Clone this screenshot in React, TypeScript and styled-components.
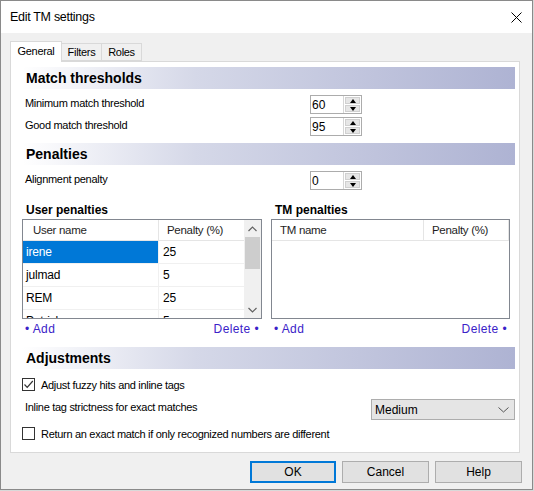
import React from 'react';
import styled, { createGlobalStyle } from 'styled-components';

const GlobalStyle = createGlobalStyle`
	html, body {
		margin: 0;
		padding: 0;
		background: #d9d9d9;
	}
	body {
		font-family: 'Liberation Sans', Arial, sans-serif;
		font-size: 11px;
		color: #000000;
	}
`;

const users = [
	{ name: 'irene', penalty: '25' },
	{ name: 'julmad', penalty: '5' },
	{ name: 'REM', penalty: '25' },
	{ name: 'Patrick', penalty: '5' },
];

const CloseIcon = () => (
	<svg width='11' height='11' viewBox='0 0 11 11'>
		<path d='M0.5 0.5 L10.5 10.5 M10.5 0.5 L0.5 10.5' stroke='#000' strokeWidth='1' fill='none' />
	</svg>
);

const Chevron = ({ up }: { up?: boolean }) => (
	<svg width='9' height='6' viewBox='0 0 9 6'>
		<path
			d={up ? 'M0.5 5 L4.5 1 L8.5 5' : 'M0.5 1 L4.5 5 L8.5 1'}
			stroke='#606060'
			strokeWidth='1.2'
			fill='none'
		/>
	</svg>
);

const CheckMark = () => (
	<svg width='11' height='11' viewBox='0 0 11 11'>
		<path d='M1.5 5.5 L4.2 8.3 L9.8 2' stroke='#333' strokeWidth='1.2' fill='none' />
	</svg>
);

const Spinner = ({ value }: { value: string }) => (
	<SpinBox>
		<SpinValue>{value}</SpinValue>
		<SpinButtons>
			<SpinBtn>
				<Arrow $up />
			</SpinBtn>
			<SpinBtn>
				<Arrow />
			</SpinBtn>
		</SpinButtons>
	</SpinBox>
);

export const App = () => (
	<>
		<GlobalStyle />
		<Window>
			<TitleBar>
				<Title>Edit TM settings</Title>
				<CloseButton>
					<CloseIcon />
				</CloseButton>
			</TitleBar>
			<Body>
				<TabStrip>
					<Tab $active>General</Tab>
					<Tab>Filters</Tab>
					<Tab>Roles</Tab>
				</TabStrip>
				<Panel>
					<Band>Match thresholds</Band>
					<SettingRow $top={6}>
						<Label>Minimum match threshold</Label>
						<Spinner value='60' />
					</SettingRow>
					<SettingRow $top={3}>
						<Label>Good match threshold</Label>
						<Spinner value='95' />
					</SettingRow>

					<Band $top={7}>Penalties</Band>
					<SettingRow $top={6}>
						<Label>Alignment penalty</Label>
						<Spinner value='0' />
					</SettingRow>

					<Lists>
						<ListColumn>
							<ListTitle>User penalties</ListTitle>
							<ListBox>
								<ListMain>
									<HeaderRow $cols='136px 86px'>
										<HeaderCell $pad={10}>User name</HeaderCell>
										<HeaderCell $pad={8}>Penalty (%)</HeaderCell>
									</HeaderRow>
									{users.map((u, i) => (
										<DataRow key={u.name} $cols='136px 86px'>
											<Cell $selected={i === 0}>{u.name}</Cell>
											<Cell $pad={4}>{u.penalty}</Cell>
										</DataRow>
									))}
								</ListMain>
								<ScrollBar>
									<ScrollArrow>
										<Chevron up />
									</ScrollArrow>
									<ScrollThumb />
									<ScrollSpace />
									<ScrollArrow>
										<Chevron />
									</ScrollArrow>
								</ScrollBar>
							</ListBox>
							<LinkRow>
								<Link>• Add</Link>
								<Link>Delete •</Link>
							</LinkRow>
						</ListColumn>
						<ListColumn>
							<ListTitle>TM penalties</ListTitle>
							<ListBox>
								<ListMain>
									<HeaderRow $cols='152px 85px'>
										<HeaderCell $pad={8}>TM name</HeaderCell>
										<HeaderCell $pad={8}>Penalty (%)</HeaderCell>
									</HeaderRow>
								</ListMain>
							</ListBox>
							<LinkRow>
								<Link>• Add</Link>
								<Link>Delete •</Link>
							</LinkRow>
						</ListColumn>
					</Lists>

					<Band $top={11}>Adjustments</Band>
					<CheckRow $top={9}>
						<CheckBox>
							<CheckMark />
						</CheckBox>
						<span>Adjust fuzzy hits and inline tags</span>
					</CheckRow>
					<ComboRow>
						<Label>Inline tag strictness for exact matches</Label>
						<Combo>
							<span>Medium</span>
							<svg width='11' height='6' viewBox='0 0 11 6'>
								<path d='M0.5 0.5 L5.5 5 L10.5 0.5' stroke='#555' strokeWidth='1' fill='none' />
							</svg>
						</Combo>
					</ComboRow>
					<CheckRow $top={7}>
						<CheckBox />
						<span>Return an exact match if only recognized numbers are different</span>
					</CheckRow>
				</Panel>
				<ButtonRow>
					<Button $primary>OK</Button>
					<Button>Cancel</Button>
					<Button>Help</Button>
				</ButtonRow>
			</Body>
		</Window>
	</>
);

const Window = styled.div`
	width: 533px;
	height: 490px;
	box-sizing: border-box;
	border: 1px solid #8a8a8a;
	background: #f0f0f0;
	display: flex;
	flex-direction: column;
	letter-spacing: -0.3px;
`;

const TitleBar = styled.div`
	height: 32px;
	background: #ffffff;
	display: flex;
	align-items: center;
	justify-content: space-between;
	padding: 0 9px 0 9px;
`;

const Title = styled.span`
	font-size: 12.5px;
	letter-spacing: -0.3px;
	color: #000000;
`;

const CloseButton = styled.span`
	display: flex;
	align-items: center;
	margin-right: 1px;
`;

const Body = styled.div`
	flex: 1;
	display: flex;
	flex-direction: column;
	padding: 8px 10px 6px 9px;
`;

const TabStrip = styled.div`
	display: flex;
	height: 20px;
	align-items: flex-end;
	position: relative;
	z-index: 1;
`;

const Tab = styled.div<{ $active?: boolean }>`
	box-sizing: border-box;
	display: flex;
	align-items: center;
	justify-content: center;
	height: ${p => (p.$active ? '21px' : '18px')};
	margin-bottom: ${p => (p.$active ? '-1px' : '0')};
	padding: 0 ${p => (p.$active ? '7px' : '6px')} ${p => (p.$active ? '2px' : '0')};
	width: ${p => (p.$active ? '52px' : '40px')};
	border: 1px solid #d9d9d9;
	border-bottom: ${p => (p.$active ? 'none' : '1px solid #d9d9d9')};
	border-left: ${p => (p.$active ? '1px solid #d9d9d9' : 'none')};
	background: ${p => (p.$active ? '#ffffff' : '#f0f0f0')};
	font-size: 11px;
`;

const Panel = styled.div`
	width: 510px;
	height: 392px;
	box-sizing: border-box;
	border: 1px solid #d9d9d9;
	background: #ffffff;
	padding: 5px 4px 0 11px;
	display: flex;
	flex-direction: column;
`;

const Band = styled.div<{ $top?: number }>`
	height: 22px;
	margin-top: ${p => p.$top ?? 0}px;
	padding-left: 4px;
	display: flex;
	align-items: center;
	background: linear-gradient(to right, #ffffff 0%, #d5d8e8 35%, #aeb3d3 100%);
	font-size: 14px;
	font-weight: bold;
	letter-spacing: 0;
	color: #000000;
`;

const SettingRow = styled.div<{ $top: number }>`
	display: grid;
	grid-template-columns: 288px 52px;
	align-items: center;
	height: 19px;
	margin-top: ${p => p.$top}px;

	& > span {
		margin-top: -4px;
	}
`;

const Label = styled.span`
	padding-left: 3px;
	font-size: 11px;
	color: #000000;
`;

const SpinBox = styled.div`
	box-sizing: border-box;
	height: 19px;
	border: 1px solid #acacac;
	display: flex;
	align-items: stretch;
	background: #ffffff;
`;

const SpinValue = styled.span`
	flex: 1;
	padding-left: 1px;
	font-size: 12px;
	display: flex;
	align-items: center;
	letter-spacing: 0;
`;

const SpinButtons = styled.div`
	width: 15px;
	display: flex;
	flex-direction: column;
	gap: 1px;
	padding: 1px;
	background: #ffffff;
	border-left: 1px solid #d6d6d6;
`;

const SpinBtn = styled.div`
	flex: 1;
	background: #e6e6e6;
	border: 1px solid #d0d0d0;
	display: flex;
	align-items: center;
	justify-content: center;
`;

const Arrow = styled.span<{ $up?: boolean }>`
	width: 0;
	height: 0;
	border-left: 3px solid transparent;
	border-right: 3px solid transparent;
	${p => (p.$up ? 'border-bottom: 4px solid #000;' : 'border-top: 4px solid #000;')}
`;

const Lists = styled.div`
	display: grid;
	grid-template-columns: 240px 239px;
	column-gap: 9px;
	margin-top: 13px;
`;

const ListColumn = styled.div`
	display: flex;
	flex-direction: column;
`;

const ListTitle = styled.div`
	height: 14px;
	padding-left: 4px;
	margin-bottom: 2px;
	font-size: 12px;
	font-weight: bold;
	letter-spacing: 0;
	line-height: 14px;
`;

const ListBox = styled.div`
	box-sizing: border-box;
	height: 100px;
	border: 1px solid #828790;
	display: flex;
	overflow: hidden;
	background: #ffffff;
`;

const ListMain = styled.div`
	flex: 1;
	display: flex;
	flex-direction: column;
	overflow: hidden;
`;

const HeaderRow = styled.div<{ $cols: string }>`
	display: grid;
	grid-template-columns: ${p => p.$cols};
	height: 20px;
	border-bottom: 1px solid #e5e5e5;
	flex-shrink: 0;
`;

const HeaderCell = styled.div<{ $pad: number }>`
	display: flex;
	align-items: center;
	padding-left: ${p => p.$pad}px;
	border-right: 1px solid #e5e5e5;
	font-size: 11.5px;
	color: #1e1e1e;
`;

const DataRow = styled.div<{ $cols: string }>`
	display: grid;
	grid-template-columns: ${p => p.$cols};
	height: 22px;
	flex-shrink: 0;
	border-bottom: 1px solid #f0f0f0;
`;

const Cell = styled.div<{ $selected?: boolean; $pad?: number }>`
	display: flex;
	align-items: center;
	padding-left: ${p => p.$pad ?? 3}px;
	font-size: 12px;
	letter-spacing: -0.2px;
	background: ${p => (p.$selected ? '#0078d7' : '#ffffff')};
	color: ${p => (p.$selected ? '#ffffff' : '#000000')};
	border-right: 1px solid #f0f0f0;
`;

const ScrollBar = styled.div`
	width: 17px;
	background: #f0f0f0;
	display: flex;
	flex-direction: column;
`;

const ScrollArrow = styled.div`
	height: 17px;
	display: flex;
	align-items: center;
	justify-content: center;
`;

const ScrollThumb = styled.div`
	height: 32px;
	margin: 0 1px;
	background: #cdcdcd;
`;

const ScrollSpace = styled.div`
	flex: 1;
`;

const LinkRow = styled.div`
	display: flex;
	justify-content: space-between;
	height: 14px;
	margin-top: 3px;
	padding: 0 3px 0 3px;
`;

const Link = styled.span`
	font-size: 12px;
	letter-spacing: 0.4px;
	color: #3a22c8;
	line-height: 14px;
`;

const CheckRow = styled.div<{ $top: number }>`
	display: flex;
	align-items: center;
	gap: 6px;
	height: 13px;
	margin-top: ${p => p.$top}px;
	font-size: 11px;
`;

const CheckBox = styled.span`
	box-sizing: border-box;
	width: 13px;
	height: 13px;
	border: 1px solid #333333;
	background: #ffffff;
	display: flex;
	align-items: center;
	justify-content: center;
`;

const ComboRow = styled.div`
	display: flex;
	justify-content: space-between;
	align-items: center;
	height: 21px;
	margin-top: 8px;

	${Label} {
		margin-top: -5px;
	}
`;

const Combo = styled.div`
	box-sizing: border-box;
	width: 144px;
	height: 21px;
	border: 1px solid #adadad;
	background: #e5e5e5;
	display: flex;
	align-items: center;
	justify-content: space-between;
	padding: 0 5px 0 3px;
	font-size: 12px;
	letter-spacing: 0;
`;

const ButtonRow = styled.div`
	display: flex;
	justify-content: flex-end;
	gap: 6px;
	margin-top: 8px;
`;

const Button = styled.div<{ $primary?: boolean }>`
	box-sizing: border-box;
	width: ${p => (p.$primary ? '86px' : '87px')};
	height: 22px;
	border: ${p => (p.$primary ? '2px solid #0078d7' : '1px solid #adadad')};
	background: #e1e1e1;
	display: flex;
	align-items: center;
	justify-content: center;
	font-size: 12px;
	letter-spacing: 0;
`;

export default App;
